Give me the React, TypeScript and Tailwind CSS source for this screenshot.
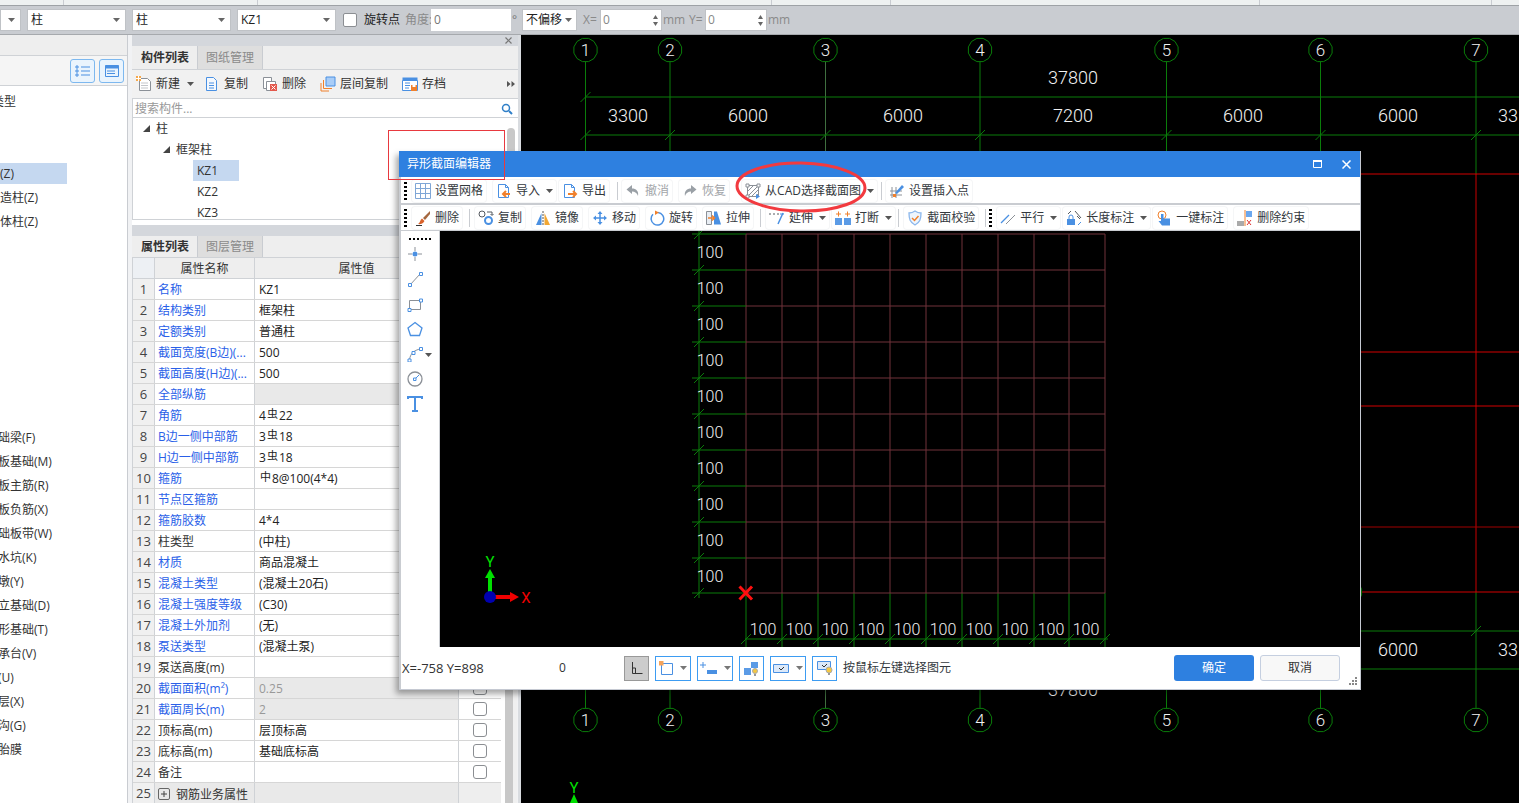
import React from "react";

const B = "#4a90e2", O = "#f0802c", G = "#8b9097", D = "#555a60";

const I = ({ children, w = 16, h = 16 }: { children: React.ReactNode; w?: number; h?: number }) => (
  <svg width={w} height={h} viewBox={`0 0 ${w} ${h}`} fill="none" className="shrink-0 block">{children}</svg>
);

const Caret = ({ c = "#555" }: { c?: string }) => (
  <svg width="7" height="4" viewBox="0 0 7 4" className="shrink-0 block"><path d="M0 0h7L3.500 4z" fill={c} /></svg>
);

const icons: Record<string, React.ReactNode> = {
  grid: <I><path d="M.5.500h15v15H.5zM5.500.500v15M10.500.500v15M.5 5.500h15M.5 10.500h15" stroke="#7fa6d6" /></I>,
  imp: <I><path d="M2.500 1.500h7l3 3v10h-10z" stroke={B} fill="#fff" /><path d="M9.500 1.500v3h3" stroke={B} /><path d="M14 11H8M10 8l-3 3 3 3" stroke={O} strokeWidth="2" fill="none" /></I>,
  exp: <I><path d="M2.500 1.500h7l3 3v10h-10z" stroke={B} fill="#fff" /><path d="M9.500 1.500v3h3" stroke={B} /><path d="M6 11h7M11 8l3 3-3 3" stroke={O} strokeWidth="2" fill="none" /></I>,
  undo: <I><path d="M7 2 1.500 6.500 7 11V8.500c3 0 5 1.500 6 4.500 1-5-2-7.500-6-7.500z" fill="#9aa0a6" /></I>,
  redo: <I><path d="M9 2l5.500 4.500L9 11V8.500c-3 0-5 1.500-6 4.500-1-5 2-7.500 6-7.500z" fill="#9aa0a6" /></I>,
  cad: <I><path d="M2.500 2.500h11v11h-11z" stroke={G} /><path d="M3 8l5-5M3 13L13 3M7 13l6-6M11 13l2-2" stroke={G} /><path d="M1 1h3v3H1zM12 1h3v3h-3zM1 12h3v3H1z" fill="#fff" stroke={G} /><path d="M11 11l4 2.500-4 2.500z" fill={B} /></I>,
  ins: <I><path d="M3 4v11M7 4v11M1 8h12M1 12h12" stroke={G} /><path d="M6 10 13 2l2 2-7 7z" fill={B} /><path d="M4 11h3v3H4z" fill={O} /></I>,
  del: <I><path d="M15 1 8 8l2 2 5-6z" fill="#a5673f" /><path d="M7 8.500 9.500 11C8 14 5 14.500 3 14c2-1 2-4 4-5.500z" fill="#d9622b" /><path d="M1 15.500h6" stroke="#333" /></I>,
  copy: <I><circle cx="4" cy="4" r="3" stroke={D} /><circle cx="10.500" cy="10.500" r="3.500" stroke={B} strokeWidth="2" /><path d="M9 2h5v3M12.500 4l1.500 1.500L15.500 4" stroke={D} /></I>,
  mirror: <I><path d="M6.500 3v12H1z" fill={B} /><path d="M9.500 3v12H15z" fill="#f2a733" /><path d="M8 1v15" stroke="#555" strokeDasharray="2 1" /></I>,
  move: <I><path d="M8 1 5.500 4h5zM8 15l-2.500-3h5zM1 8l3-2.500v5zM15 8l-3-2.500v5z" fill={B} /><path d="M8 3v10M3 8h10" stroke={B} strokeWidth="1.500" /></I>,
  rot: <I><path d="M9 2.500a6.300 6.300 0 1 1-5 1.800" stroke={B} strokeWidth="1.500" /><path d="M6 .5l4 2-4 2.500z" fill={O} /></I>,
  stretch: <I><path d="M.5 1.500h5v13h-5z" fill="#e8edf3" stroke={G} /><path d="M8 1.500h3l4 13H8z" fill={B} /><path d="M2 8h6M6 5.500 8.500 8 6 10.500" stroke={O} strokeWidth="1.500" /></I>,
  extend: <I><path d="M0 4h2M4 4h2M8 4h2" stroke={D} /><path d="M14 3l-5 11" stroke={B} strokeWidth="1.500" /><path d="M11 4h4" stroke={B} /></I>,
  brk: <I><path d="M0 8h7v7H0zM9 8h7v7H9z" fill="#5b9be6" /><path d="M1 4h5M3.500 1.500v5M10 4h5" stroke={O} /><path d="M12.500 1.500v5" stroke={O} /></I>,
  shield: <I><path d="M8 1c2 1.500 4 2 6 2 0 6-1 9.500-6 12C3 12.500 2 9 2 3c2 0 4-.5 6-2z" stroke="#8db8ec" fill="#eef5fd" strokeWidth="1.300" /><path d="M5 8l2.500 2.500L11.500 6" stroke={O} strokeWidth="1.500" /></I>,
  para: <I><path d="M1 13 9 5" stroke={B} strokeWidth="1.300" /><path d="M6 14l9-9" stroke={G} /></I>,
  lock: <I><path d="M3 9V7a2 2 0 0 1 4 0v2" stroke={B} /><path d="M1 9h8v6H1z" fill={B} /><path d="M5 1 2 4M9 1l6 7M11 6l3 3" stroke={D} /><path d="M15 12l-3 3" stroke={B} /></I>,
  touch: <I><circle cx="6" cy="5" r="4" stroke={O} /><path d="M5 4h2.500v4.500H14v7H6L2.500 11l2.500 0z" fill={B} /></I>,
  delc: <I><path d="M0 11h7v5H0z" fill="#aaa" /><path d="M9 1h6v6H9z" fill="#6aa7ee" /><path d="M8 0v16" stroke={O} /><path d="M10 10l4 5M14 10l-4 5" stroke="#d33" /></I>,
  newf: <I><path d="M3.500 2.500h8l3 3v9h-11z" stroke={G} fill="#fff" /><path d="M5 7h7M5 9.500h7M5 12h7" stroke="#c3c6ca" /><path d="M0 0h5v5H0z" fill="#f5a84c" /><path d="M2.500 0v5M0 2.500h5" stroke="#fff" /></I>,
  cp: <I><path d="M2.500 1.500h7l3 3v10h-10z" stroke={B} fill="#f4f8fd" /><path d="M5 7h5M5 9.500h5M5 12h5" stroke={B} /></I>,
  rm: <I><path d="M1.500 1.500h8v11h-8z" stroke={G} fill="#fff" /><path d="M4.500 5.500h9v9h-9z" stroke={G} fill="#fff" /><path d="M8 8h7v7H8z" fill="#e3584c" /><path d="M9.500 9.500l4 4M13.500 9.500l-4 4" stroke="#fff" /></I>,
  layer: <I><path d="M6 1h9v9H6z" fill="#a9cdf7" stroke={B} /><path d="M3.500 4v8.500H12M1 7v8h8" stroke={O} /></I>,
  save: <I><path d="M.5 1.500h15v3H.5z" fill={B} /><path d="M.5 4.500h15v10H.5z" stroke={B} fill="#fff" /><path d="M3 7h5M3 9.500h5M3 12h4" stroke={B} /><path d="M9 9h6v6H9z" fill={O} /><path d="M10.500 9h3v2h-3z" fill="#fff" /></I>,
};

type Tool = { i?: string; t?: string; c?: boolean; off?: boolean; sep?: boolean; grip?: boolean; cls: string };
const Grip = ({ cls }: { cls: string }) => (
  <div className={`flex flex-col gap-[2px] shrink-0 w-[3px] ${cls}`}>
    {[0, 1, 2, 3, 4].map((k) => <div key={k} className="w-[3px] h-[2px] bg-black" />)}
  </div>
);

const ToolBtn = ({ tool }: { tool: Tool }) => {
  if (tool.grip) return <Grip cls={tool.cls} />;
  if (tool.sep) return <div className={`w-px h-[18px] bg-[#c9ccd1] shrink-0 ${tool.cls}`} />;
  return (
    <div className={`h-[22px] flex items-center gap-[4px] px-[3px] rounded-[3px] ring-1 ring-[#f5f6f7] shrink-0 ${tool.cls}`}>
      {tool.i && icons[tool.i]}
      <span className={tool.off ? "text-[#a2a5a9]" : "text-[#33383d]"}>{tool.t}</span>
      {tool.c && <span className="ml-[2px]"><Caret /></span>}
    </div>
  );
};

const row1: Tool[] = [
  { grip: true, cls: "ml-[3px]" },
  { i: "grid", t: "设置网格", cls: "ml-[5px]" },
  { i: "imp", t: "导入", c: true, cls: "ml-[7px]" },
  { i: "exp", t: "导出", cls: "ml-[3px]" },
  { sep: true, cls: "ml-[8px]" },
  { i: "undo", t: "撤消", off: true, cls: "ml-[4px]" },
  { i: "redo", t: "恢复", off: true, cls: "ml-[7px]" },
  { i: "cad", t: "从CAD选择截面图", c: true, cls: "ml-[13px]" },
  { sep: true, cls: "ml-[4px]" },
  { i: "ins", t: "设置插入点", cls: "ml-[4px]" },
];
const row2: Tool[] = [
  { grip: true, cls: "ml-[3px]" },
  { i: "del", t: "删除", cls: "ml-[5px]" },
  { sep: true, cls: "ml-[7px]" },
  { i: "copy", t: "复制", cls: "ml-[5px]" },
  { i: "mirror", t: "镜像", cls: "ml-[7px]" },
  { i: "move", t: "移动", cls: "ml-[7px]" },
  { i: "rot", t: "旋转", cls: "ml-[7px]" },
  { i: "stretch", t: "拉伸", cls: "ml-[7px]" },
  { sep: true, cls: "ml-[7px]" },
  { i: "extend", t: "延伸", c: true, cls: "ml-[5px]" },
  { i: "brk", t: "打断", c: true, cls: "ml-[3px]" },
  { sep: true, cls: "ml-[3px]" },
  { i: "shield", t: "截面校验", cls: "ml-[5px]" },
  { sep: true, cls: "ml-[7px]" },
  { grip: true, cls: "ml-[3px]" },
  { i: "para", t: "平行", c: true, cls: "ml-[5px]" },
  { i: "lock", t: "长度标注", c: true, cls: "ml-[3px]" },
  { i: "touch", t: "一键标注", cls: "ml-[3px]" },
  { i: "delc", t: "删除约束", cls: "ml-[7px]" },
];

const Select = ({ t, w }: { t: string; w: string }) => (
  <div className={`${w} h-[22px] bg-white border border-[#bfc2c6] flex items-center justify-between pl-[3px] pr-[5px] text-[#222] shrink-0`}>
    <span>{t}</span><Caret c="#666" />
  </div>
);

const Spin = () => (
  <div className="w-[62px] h-[22px] bg-white border border-[#bfc2c6] flex items-center justify-between pl-[2px] pr-[3px] text-[#888] shrink-0">
    <span>0</span>
    <div className="flex flex-col gap-[3px]">
      <svg width="5" height="4"><path d="M0 4h5L2.500 0z" fill="#666" /></svg>
      <svg width="5" height="4"><path d="M0 0h5L2.500 4z" fill="#666" /></svg>
    </div>
  </div>
);

const leftItems: { t: string; cls: string; on?: boolean }[] = [
  { t: "构件类型", cls: "h-[24px] ml-[-32px]" },
  { t: "", cls: "h-[49px]" },
  { t: "柱(Z)", cls: "h-[21px] ml-[-12px]", on: true },
  { t: "构造柱(Z)", cls: "h-[24px] mt-[2px] ml-[-12px]" },
  { t: "砌体柱(Z)", cls: "h-[24px] ml-[-12px]" },
  { t: "", cls: "h-[192px]" },
  { t: "基础梁(F)", cls: "h-[24px] ml-[-14px]" },
  { t: "筏板基础(M)", cls: "h-[24px] ml-[-14px]" },
  { t: "筏板主筋(R)", cls: "h-[24px] ml-[-14px]" },
  { t: "筏板负筋(X)", cls: "h-[24px] ml-[-14px]" },
  { t: "基础板带(W)", cls: "h-[24px] ml-[-14px]" },
  { t: "集水坑(K)", cls: "h-[24px] ml-[-14px]" },
  { t: "柱墩(Y)", cls: "h-[24px] ml-[-14px]" },
  { t: "独立基础(D)", cls: "h-[24px] ml-[-14px]" },
  { t: "条形基础(T)", cls: "h-[24px] ml-[-14px]" },
  { t: "桩承台(V)", cls: "h-[24px] ml-[-14px]" },
  { t: "桩(U)", cls: "h-[24px] ml-[-14px]" },
  { t: "垫层(X)", cls: "h-[24px] ml-[-14px]" },
  { t: "地沟(G)", cls: "h-[24px] ml-[-14px]" },
  { t: "砖胎膜", cls: "h-[24px] ml-[-14px]" },
];

const Rebar = ({ g }: { g: string }) => <span className="text-[11px] relative -top-[2px] mx-px">{g}</span>;

type Row = { n: string; v?: React.ReactNode; blue?: boolean; gray?: boolean; dim?: boolean };
const rows: Row[] = [
  { n: "名称", v: "KZ1", blue: true },
  { n: "结构类别", v: "框架柱", blue: true },
  { n: "定额类别", v: "普通柱", blue: true },
  { n: "截面宽度(B边)(...", v: "500", blue: true },
  { n: "截面高度(H边)(...", v: "500", blue: true },
  { n: "全部纵筋", blue: true, gray: true },
  { n: "角筋", v: <>4<Rebar g="虫" />22</>, blue: true },
  { n: "B边一侧中部筋", v: <>3<Rebar g="虫" />18</>, blue: true },
  { n: "H边一侧中部筋", v: <>3<Rebar g="虫" />18</>, blue: true },
  { n: "箍筋", v: <><Rebar g="中" />8@100(4*4)</>, blue: true },
  { n: "节点区箍筋", blue: true },
  { n: "箍筋胶数", v: "4*4", blue: true },
  { n: "柱类型", v: "(中柱)" },
  { n: "材质", v: "商品混凝土", blue: true },
  { n: "混凝土类型", v: "(混凝土20石)", blue: true },
  { n: "混凝土强度等级", v: "(C30)", blue: true },
  { n: "混凝土外加剂", v: "(无)", blue: true },
  { n: "泵送类型", v: "(混凝土泵)", blue: true },
  { n: "泵送高度(m)" },
  { n: "截面面积(m²)", v: "0.25", blue: true, gray: true, dim: true },
  { n: "截面周长(m)", v: "2", blue: true, gray: true, dim: true },
  { n: "顶标高(m)", v: "层顶标高" },
  { n: "底标高(m)", v: "基础底标高" },
  { n: "备注" },
];

const Tab = ({ t, on }: { t: string; on?: boolean }) => (
  <div className={`w-[65px] h-full flex items-center justify-center border-r border-[#c9ccd1] ${on ? "text-[#333] font-bold bg-[#eeeeee]" : "text-[#8a8a8a] bg-[#dedede]"}`}>{t}</div>
);

const GREEN = "#0a7c0a";
const axes = [585.5, 670, 825.5, 980, 1166.5, 1320.500, 1476];
const bubble = (cx: number, cy: number, r = 12) =>
  Array.from({ length: 12 }, (_, k) => {
    const a = (k * Math.PI) / 6 + Math.PI / 12;
    return `${(cx + r * Math.cos(a)).toFixed(1)},${(cy + r * Math.sin(a)).toFixed(1)}`;
  }).join(" ");

const Tick = ({ x, y, c = GREEN }: { x: number; y: number; c?: string }) => (
  <line x1={x - 5} y1={y + 5} x2={x + 5} y2={y - 5} stroke={c} />
);

const CT = ({ x, y, t, s = 18 }: { x: number; y: number; t: string; s?: number }) => (
  <text x={x} y={y} textAnchor="middle" fill="#f2f2f2" fontSize={s} fontFamily="Roboto" fontWeight={300}>{t}</text>
);

const dims = [[628, "3300"], [748, "6000"], [903, "6000"], [1073, "7200"], [1243, "6000"], [1398, "6000"]] as const;

const MainCanvas = () => (
  <svg width="998" height="768" viewBox="521 35 998 768" className="block">
    <rect x="521" y="35" width="998" height="768" fill="#000" />
    {axes.map((x, k) => (
      <g key={x}>
        {k === 6 ? (
          <>
            <line x1={x} y1="62" x2={x} y2="174" stroke={GREEN} />
            <line x1={x} y1="174" x2={x} y2="592" stroke="#c80000" />
            <line x1={x} y1="592" x2={x} y2="708" stroke={GREEN} />
          </>
        ) : (
          <line x1={x} y1="62" x2={x} y2="708" stroke={k === 2 ? "#3f6f3f" : GREEN} />
        )}
        <polygon points={bubble(x, 50)} stroke={GREEN} fill="#000" />
        <polygon points={bubble(x, 720)} stroke={GREEN} fill="#000" />
        <CT x={x} y={56} t={String(k + 1)} s={17} />
        <CT x={x} y={726} t={String(k + 1)} s={17} />
        <Tick x={x} y={135} />
        <Tick x={x} y={631} />
      </g>
    ))}
    <Tick x={585.5} y={97} />
    {[97, 135, 631, 669].map((y) => <line key={y} x1="585" y1={y} x2="1519" y2={y} stroke={GREEN} />)}
    {[174, 352, 406, 527, 592].map((y) => <line key={y} x1="1361" y1={y} x2="1519" y2={y} stroke={y === 527 ? "#a00000" : "#d20000"} />)}
    <polygon points={bubble(1350, 592)} stroke={GREEN} fill="#000" />
    <CT x={1073} y={84} t="37800" />
    <CT x={1073} y={696} t="37800" />
    {dims.map(([x, t]) => <CT key={x} x={x} y={122} t={t} />)}
    <CT x={1398} y={656} t="6000" />
    <text x="1498" y="122" fill="#f2f2f2" fontSize="18" fontFamily="Roboto" fontWeight={300}>33</text>
    <text x="1498" y="656" fill="#f2f2f2" fontSize="18" fontFamily="Roboto" fontWeight={300}>33</text>
    <text x="574" y="793" textAnchor="middle" fill="#00e000" fontSize="15" fontFamily="Roboto">Y</text>
    <path d="M574 794l-4 9h8z" fill="#00e000" />
  </svg>
);

const gx = [746, 782, 818, 854, 890, 926, 962, 998, 1034, 1069, 1105];
const gy = [234, 270, 306, 342, 378, 414, 450, 486, 522, 558, 593];

const SectionCanvas = () => (
  <svg width="920" height="416" viewBox="440 231 920 416" className="block">
    <rect x="440" y="231" width="920" height="416" fill="#000" />
    {gx.map((x) => <g key={x}><line x1={x} y1="234" x2={x} y2="593" stroke="#70323a" /><line x1={x} y1="593" x2={x} y2="647" stroke={GREEN} /><Tick x={x} y={639} /></g>)}
    {gy.map((y) => <g key={y}><line x1="746" y1={y} x2="1105" y2={y} stroke="#70323a" /><line x1="692" y1={y} x2="746" y2={y} stroke={GREEN} /><Tick x={699} y={y} /></g>)}
    <line x1="699" y1="229" x2="699" y2="598" stroke={GREEN} />
    <line x1="745" y1="639" x2="1108" y2="639" stroke={GREEN} />
    {gy.slice(0, 10).map((y) => <CT key={y} x={710} y={258 + (y - 234)} t="100" s={16} />)}
    {gx.slice(0, 10).map((x) => <CT key={x} x={x + 17} y={635} t="100" s={16} />)}
    <path d="M739.500 586.500 752 599.500M752 586.500 739.500 599.500" stroke="#ff1010" strokeWidth="3" />
    <rect x="488" y="575" width="4" height="20" fill="#00e000" />
    <path d="M490 569l-5 9h10z" fill="#00e000" />
    <rect x="492" y="595" width="20" height="4" fill="#f00000" />
    <path d="M519 597l-9-5v10z" fill="#f00000" />
    <circle cx="490" cy="597" r="6" fill="#0000b0" />
    <text x="490" y="567" textAnchor="middle" fill="#00e000" fontSize="15" fontFamily="Roboto">Y</text>
    <text x="526" y="603" textAnchor="middle" fill="#f00000" fontSize="15" fontFamily="Roboto">X</text>
  </svg>
);

const side = [
  <I key="1"><path d="M8 1v4M8 11v4M1 8h4M11 8h4" stroke={G} /><circle cx="8" cy="8" r="2.500" fill={B} /></I>,
  <I key="2"><path d="M3 14 13 3" stroke={G} /><path d="M1.500 12.500h3v3h-3zM12.500 1.500h3v3h-3z" fill="#fff" stroke={B} /></I>,
  <I key="3"><path d="M2.500 4.500h11v9h-11z" stroke={G} /><path d="M1 12.500h3v3H1zM12.500 3h3v3h-3z" fill="#fff" stroke={B} /></I>,
  <I key="4"><path d="M8 1.500 15 7l-2.500 7.500h-9L1 7z" stroke={B} strokeWidth="1.300" /></I>,
  <I key="5"><path d="M2.500 14C3 8 7 4 13.500 3" stroke={G} /><path d="M1 13h3v3H1zM5 5.500h3v3H5zM12.500 1.500h3v3h-3z" fill="#fff" stroke={B} /></I>,
  <I key="6"><circle cx="8" cy="8" r="7" stroke={G} strokeWidth="1.300" /><path d="M8 8l4-4" stroke={B} /><path d="M6.500 7h2.500v2.500H6.500z" fill="#fff" stroke={B} /></I>,
  <I key="7"><path d="M1 3V1h14v2M8 1v14M5 15h6" stroke={B} strokeWidth="2" /></I>,
];

const BarBtn = ({ w, caret, on, children }: { w: string; caret?: boolean; on?: boolean; children: React.ReactNode }) => (
  <div className={`${w} h-[25px] flex items-center justify-center gap-[7px] border shrink-0 ${on ? "bg-[#cccccc] border-[#999]" : "bg-white border-[#3d9cf2]"}`}>
    {children}{caret && <Caret c="#777" />}
  </div>
);

export default function App() {
  return (
    <div className="relative w-[1519px] h-[803px] overflow-hidden bg-[#f1f2f4] text-[12px] leading-none text-[#333] whitespace-nowrap font-['Open_Sans','Noto_Sans_CJK_SC',sans-serif]">
      {/* top strip */}
      <div className="h-[6px] bg-[#eef1f1] border-b border-[#9ea2a6] flex">
        <div className="w-[64px] border-r border-[#c9ccd1]" />
        <div className="w-[194px] border-r border-[#c9ccd1]" />
        <div className="w-[514px] border-r border-[#c9ccd1]" />
        <div className="w-[119px] border-r border-[#c9ccd1]" />
        <div className="w-[369px] border-r border-[#c9ccd1]" />
        <div className="w-[232px] border-r border-[#c9ccd1]" />
      </div>
      {/* property toolbar */}
      <div className="h-[29px] bg-[#c9ccd1] border-b border-[#a6a9ad] flex items-center gap-[6px]">
        <Select t="" w="w-[21px]" />
        <Select t="柱" w="w-[99px]" />
        <Select t="柱" w="w-[99px]" />
        <Select t="KZ1" w="w-[99px]" />
        <div className="w-[14px] h-[14px] bg-white border border-[#8b8e92] rounded-[2px] ml-[1px]" />
        <span className="text-[#222] w-[36px] ml-px">旋转点</span>
        <span className="text-[#8a8a8a] -ml-px w-[26px]">角度:</span>
        <div className="w-[80px] h-[22px] bg-white flex items-center pl-[3px] text-[#777] -ml-[6px]">0</div>
        <span className="text-[#777] -ml-[5px] w-[3px]">°</span>
        <div className="w-[55px] h-[22px] bg-white border border-[#bfc2c6] flex items-center justify-between pl-[3px] pr-[4px] text-[#222] ml-[1px]">
          <span>不偏移</span><Caret c="#666" />
        </div>
        <span className="text-[#8a8a8a] w-[15px]">X=</span>
        <div className="-ml-[4px]"><Spin /></div>
        <span className="text-[#8a8a8a] -ml-[5px] w-[23px]">mm</span>
        <span className="text-[#8a8a8a] -ml-[3px] w-[15px]">Y=</span>
        <div className="-ml-[5px]"><Spin /></div>
        <span className="text-[#8a8a8a] -ml-[5px]">mm</span>
      </div>

      <div className="flex h-[768px]">
        {/* left tree panel */}
        <div className="w-[128px] shrink-0 bg-white border-r border-[#c9ccd1] overflow-hidden flex flex-col">
          <div className="h-[21px] bg-[#eeeeee] border-b border-[#cfd2d6] shrink-0" />
          <div className="h-[30px] bg-[#f5f5f5] border-b border-[#cfd2d6] shrink-0 flex items-center justify-end gap-[4px] pr-[3px]">
            <div className="w-[25px] h-[24px] rounded-[3px] border border-[#7db8ef] bg-[#eaf4fd] flex items-center justify-center">
              <I><path d="M1 3h2v2H1zM1 7h2v2H1zM1 11h2v2H1z" stroke={B} fill="none" /><path d="M6 4h9M6 8h9M6 12h9" stroke={B} /></I>
            </div>
            <div className="w-[25px] h-[24px] rounded-[3px] border border-[#7db8ef] bg-[#eaf4fd] flex items-center justify-center">
              <I><path d="M1.500 2.500h13v11h-13z" stroke={B} /><path d="M1.500 2.500h13v3h-13z" fill={B} /><path d="M3 8h8M3 10.500h8" stroke={B} /></I>
            </div>
          </div>
          <div className="pt-[4px] flex flex-col">
            {leftItems.map((it, k) => (
              <div key={k} className={`flex items-center shrink-0 whitespace-nowrap ${it.cls} ${it.on ? "bg-[#c5d8f0] w-[79px]" : ""}`}>{it.t}</div>
            ))}
          </div>
        </div>

        <div className="w-[4px] shrink-0" />

        {/* middle panels */}
        <div className="w-[386px] shrink-0 flex flex-col overflow-hidden">
          <div className="h-[11px] bg-[#d4d7dc] flex items-center justify-end pr-[6px] shrink-0">
            <svg width="7" height="7"><path d="M.5.500l6 6M6.500.500l-6 6" stroke="#777" strokeWidth="1.200" /></svg>
          </div>
          <div className="h-[23px] bg-[#eeeeee] flex shrink-0 pl-px">
            <Tab t="构件列表" on /><Tab t="图纸管理" />
          </div>
          <div className="h-[30px] bg-[#f1f1f1] border-y border-[#cfd2d6] flex items-center shrink-0 pl-[4px] gap-[14px] pr-[3px]">
            <div className="flex items-center gap-[4px]">{icons.newf}<span>新建</span><span className="ml-[3px]"><Caret /></span></div>
            <div className="flex items-center gap-[4px] -ml-[4px]">{icons.cp}<span>复制</span></div>
            <div className="flex items-center gap-[4px]">{icons.rm}<span>删除</span></div>
            <div className="flex items-center gap-[4px]">{icons.layer}<span>层间复制</span></div>
            <div className="flex items-center gap-[4px]">{icons.save}<span>存档</span></div>
            <svg width="8" height="6" className="ml-auto"><path d="M0 0l3.500 3L0 6zM4.500 0 8 3 4.500 6z" fill="#555" /></svg>
          </div>
          <div className="h-[19px] bg-white border-b border-[#cfd2d6] border-l flex items-center justify-between pl-[2px] pr-[5px] pt-[2px] text-[#999] shrink-0">
            <span>搜索构件...</span>
            <svg width="12" height="12" viewBox="0 0 12 12" fill="none"><circle cx="5" cy="5" r="3.500" stroke="#2f7fc8" strokeWidth="1.500" /><path d="M8 8l3 3" stroke="#2f7fc8" strokeWidth="2" /></svg>
          </div>
          <div className="h-[102px] bg-white border-l border-b border-[#cfd2d6] shrink-0 relative overflow-hidden">
            <div className="h-[21px] flex items-center pl-[10px] gap-[6px]"><svg width="7" height="7"><path d="M7 0v7H0z" fill="#444" /></svg><span>柱</span></div>
            <div className="h-[21px] flex items-center pl-[30px] gap-[6px]"><svg width="7" height="7"><path d="M7 0v7H0z" fill="#444" /></svg><span>框架柱</span></div>
            <div className="h-[21px] flex items-center ml-[60px] w-[46px] pl-[4px] bg-[#c5d8f0]">KZ1</div>
            <div className="h-[21px] flex items-center ml-[60px] pl-[4px]">KZ2</div>
            <div className="h-[21px] flex items-center ml-[60px] pl-[4px]">KZ3</div>
            <div className="absolute right-[3px] top-[10px] w-[8px] h-[80px] bg-[#c8c8c8] rounded-[4px]" />
          </div>
          <div className="h-[5px] bg-white shrink-0" />
          <div className="h-[11px] bg-[#d4d7dc] shrink-0" />
          <div className="h-[22px] bg-[#eeeeee] flex shrink-0 pl-px border-b border-[#cfd2d6]">
            <Tab t="属性列表" on /><Tab t="图层管理" />
          </div>
          <div className="flex flex-1 min-h-0 overflow-hidden">
            <div className="w-[369px] shrink-0 border-l border-[#cfd2d6]">
              <div className="h-[21px] flex border-b border-[#cfd2d6] bg-[#eeeeee]">
                <div className="w-[22px] bg-[#edf0f4] border-r border-[#cfd2d6]" />
                <div className="w-[100px] flex items-center justify-center border-r border-[#cfd2d6] pt-[2px]">属性名称</div>
                <div className="w-[204px] flex items-center justify-center border-r border-[#cfd2d6] pt-[2px]">属性值</div>
              </div>
              {rows.map((r, k) => (
                <div key={k} className="h-[21px] flex border-b border-[#d6d6d6] bg-white">
                  <div className="w-[22px] flex items-center justify-center bg-[#f0f0f0] border-r border-[#cfd2d6] text-[13px] text-[#444]">{k + 1}</div>
                  <div className={`w-[100px] flex items-center pl-[3px] pt-[2px] border-r border-[#cfd2d6] whitespace-nowrap overflow-hidden ${r.blue ? "text-[#2a5fe8]" : "text-[#333]"}`}>{r.n}</div>
                  <div className={`w-[204px] pl-[4px] pt-[5px] border-r border-[#cfd2d6] whitespace-pre ${r.gray ? "bg-[#e9e9e9]" : ""} ${r.dim ? "text-[#999]" : "text-[#222]"}`}>{r.v}</div>
                  <div className={`w-[42px] flex items-center justify-center ${r.gray && !r.dim ? "bg-[#e9e9e9]" : ""}`}>
                    <div className="w-[14px] h-[14px] rounded-[3px] border border-[#8b8e92] bg-white" />
                  </div>
                </div>
              ))}
              <div className="h-[21px] flex bg-white">
                <div className="w-[22px] flex items-center justify-center bg-[#f0f0f0] border-r border-[#cfd2d6] text-[13px] text-[#444]">25</div>
                <div className="w-[100px] flex items-center pl-[3px] gap-[6px] border-r border-[#cfd2d6] bg-[#e9e9e9] whitespace-nowrap">
                  <svg width="12" height="12" viewBox="0 0 12 12" fill="none" className="shrink-0"><rect x=".5" y=".5" width="11" height="11" rx="1.500" stroke="#666" /><path d="M3 6h6M6 3v6" stroke="#444" /></svg>
                  <span className="pt-[2px]">钢筋业务属性</span>
                </div>
                <div className="w-[204px] bg-[#e9e9e9] border-r border-[#cfd2d6]" />
                <div className="w-[42px] bg-[#eeeeee]" />
              </div>
            </div>
            <div className="w-[4px] bg-white shrink-0" />
            <div className="w-[8px] bg-[#c8c8c8] shrink-0" />
            <div className="w-[4px] bg-[#f0f0f0] shrink-0" />
          </div>
        </div>

        <div className="w-[3px] shrink-0 bg-[#d9dce0]" />

        <MainCanvas />
      </div>

      {/* red annotation rectangle */}
      <div className="absolute left-[388px] top-[130px] w-[117px] h-[50px] border border-[#e8393f] z-20" />

      {/* dialog */}
      <div className="absolute left-[399px] top-[151px] w-[962px] h-[539px] z-10 bg-white border-r border-b border-[#c5c9d2] shadow-[-3px_4px_6px_rgba(0,0,0,0.35)] flex flex-col">
        <div className="h-[26px] bg-[#2e80e0] flex items-center justify-between text-white pl-[8px] pr-[9px] shrink-0">
          <span>异形截面编辑器</span>
          <div className="flex items-center gap-[20px]">
            <svg width="9" height="8"><path d="M.5 1.500h8v6h-8z" stroke="#fff" fill="none" /><path d="M0 1h9" stroke="#fff" strokeWidth="2" /></svg>
            <svg width="9" height="9"><path d="M.5.500l8 8M8.500.500l-8 8" stroke="#fff" strokeWidth="1.500" /></svg>
          </div>
        </div>
        <div className="flex-1 min-h-0 border-l-2 border-[#c9ccd1] flex flex-col">
          <div className="h-[28px] border-b-2 border-[#c9ccd1] pt-[2px] flex items-center shrink-0">
            {row1.map((t, k) => <ToolBtn key={k} tool={t} />)}
          </div>
          <div className="h-[26px] border-b border-[#c9ccd1] flex items-center shrink-0">
            {row2.map((t, k) => <ToolBtn key={k} tool={t} />)}
          </div>
          <div className="flex h-[416px] shrink-0">
            <div className="w-[39px] shrink-0 flex flex-col items-center pt-[7px] border-r border-[#c9ccd1]">
              <div className="flex gap-[2px] mb-[6px]">
                {[0, 1, 2, 3, 4, 5].map((k) => <div key={k} className="w-[2px] h-[2px] bg-black" />)}
              </div>
              <div className="flex flex-col gap-[9px] -ml-[10px]">
                {side.map((ic, k) => (
                  <div key={k} className="flex items-center gap-[2px] relative">
                    {ic}
                    {k === 4 && <span className="absolute left-[18px] top-[7px]"><Caret /></span>}
                  </div>
                ))}
              </div>
            </div>
            <SectionCanvas />
          </div>
          <div className="flex-1 flex items-center relative">
            <span className="ml-[1px] w-[157px] text-[13px] text-[#333]">X=-758 Y=898</span>
            <span className="w-[65px] text-[#333]">0</span>
            <div className="flex items-center gap-[6px]">
              <BarBtn w="w-[25px]" on><I w={12} h={12}><path d="M1.500 0v11.500h10M1.500 6h3v5.500" stroke="#333" /></I></BarBtn>
              <BarBtn w="w-[36px]" caret><I w={14} h={14}><path d="M2.500 2.500h11v11h-11z" stroke={B} /><path d="M0 0h4.500v4.500H0z" fill="#f5a45c" /></I></BarBtn>
              <BarBtn w="w-[36px]" caret><I w={17} h={14}><path d="M0 4h6M3 1v6" stroke={B} /><path d="M7 9h10v4H7z" fill={B} /></I></BarBtn>
              <BarBtn w="w-[25px]"><I w={15} h={15}><path d="M0 7h7v7H0zM7 1h7v6H7z" fill="#5b9be6" /><circle cx="11" cy="10" r="2.500" fill="#f5c842" stroke="#aaa" /><path d="M10 13h2v2h-2z" fill="#999" /></I></BarBtn>
              <BarBtn w="w-[36px]" caret><I w={16} h={11}><path d="M.5 1.500h15v8H.5z" stroke={B} fill="#dce9f9" /><path d="M6 5l2 2 3-3" stroke="#333" /></I></BarBtn>
              <BarBtn w="w-[25px]"><I w={16} h={16}><path d="M.5 1.500h13v8H.5z" stroke={B} fill="#dce9f9" /><path d="M5 5l2 2 3-3" stroke="#333" /><circle cx="12" cy="10" r="3" fill="#f5c842" stroke="#aaa" /><path d="M11 13h2v2h-2z" fill="#999" /></I></BarBtn>
            </div>
            <span className="ml-[6px] text-[#33383d]">按鼠标左键选择图元</span>
            <div className="ml-auto mr-[20px] flex gap-[6px]">
              <div className="w-[80px] h-[26px] rounded-[3px] bg-[#2e80e0] text-white flex items-center justify-center">确定</div>
              <div className="w-[80px] h-[26px] rounded-[3px] bg-[#f8f8f8] border border-[#c5cfe0] flex items-center justify-center">取消</div>
            </div>
            <svg width="9" height="9" className="absolute right-[3px] bottom-[3px]">
              <path d="M7 0h2v2H7zM4 3h2v2H4zM7 3h2v2H7zM1 6h2v2H1zM4 6h2v2H4zM7 6h2v2H7z" fill="#888" />
            </svg>
          </div>
        </div>
      </div>

      {/* hand-drawn ellipse annotation */}
      <svg width="140" height="56" viewBox="0 0 140 56" className="absolute left-[731px] top-[159px] z-20" fill="none">
        <ellipse cx="70" cy="28" rx="64" ry="24" stroke="#f23a3f" strokeWidth="3" transform="rotate(1 70 28)" />
      </svg>
    </div>
  );
}
